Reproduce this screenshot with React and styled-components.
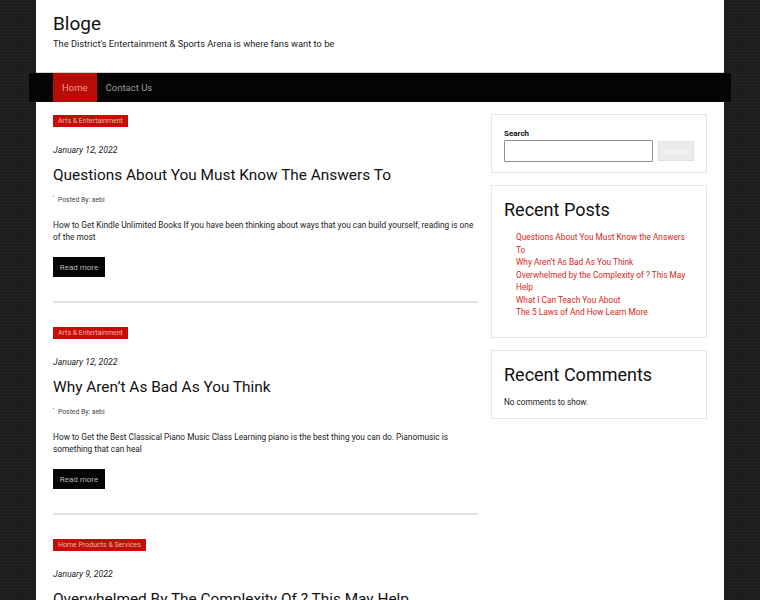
import React from "react";
import styled, { createGlobalStyle } from "styled-components";

const Global = createGlobalStyle`
  html, body { margin: 0; padding: 0; }
  body {
    background-color: #1b1b1d;
    background-image:
      linear-gradient(rgba(255,255,255,0.025) 1px, transparent 1px),
      linear-gradient(90deg, rgba(255,255,255,0.025) 1px, transparent 1px);
    background-size: 3px 3px;
    font-family: Roboto, "Liberation Sans", Arial, sans-serif;
    color: #222;
  }
`;

const Page = styled.div`
  width: 688px;
  margin: 0 auto;
  background: #fff;
  min-height: 600px;
`;

const Header = styled.header`
  height: 73px;
  box-sizing: border-box;
  padding: 13px 17px 0;
  border-bottom: 1px solid #d4d4d4;
`;

const SiteTitle = styled.h1`
  margin: 0;
  font-size: 19px;
  font-weight: 400;
  line-height: 22px;
  color: #111;
`;

const Tagline = styled.p`
  margin: 3px 0 0;
  font-size: 9.3px;
  line-height: 12px;
  color: #222;
`;

const Nav = styled.nav`
  margin: 0 -7px;
  height: 29px;
  background: #050505;
  border-radius: 3px;
  display: flex;
  padding-left: 24px;
`;

const NavItem = styled.a`
  display: flex;
  align-items: center;
  padding: 0 9px;
  font-size: 9.5px;
  color: ${(p) => (p.$active ? "#f39a94" : "#9a9a9a")};
  background: ${(p) => (p.$active ? "#b80c06" : "transparent")};
  text-decoration: none;
`;

const Main = styled.div`
  display: flex;
  gap: 13px;
  padding: 0 17px;
`;

const Content = styled.main`
  width: 425px;
  padding-top: 13px;
`;

const Post = styled.article`
  display: flex;
  flex-direction: column;
  align-items: flex-start;
`;

const Badge = styled.span`
  display: inline-block;
  height: 12px;
  line-height: 12px;
  padding: 0 5px;
  background: #c70b06;
  color: #f6b0aa;
  font-size: 7px;
`;

const PostDate = styled.div`
  margin-top: 18px;
  font-size: 8.7px;
  line-height: 11px;
  font-style: italic;
  color: #222;
`;

const PostTitle = styled.h2`
  margin: 9px 0 0;
  font-size: 15.4px;
  line-height: 20px;
  font-weight: 400;
  color: #111;
  white-space: nowrap;
`;

const Meta = styled.div`
  margin-top: 10px;
  display: flex;
  align-items: flex-start;
  gap: 4px;
  font-size: 6.8px;
  line-height: 10px;
  color: #444;
`;

const Dot = styled.span`
  width: 1px;
  height: 1px;
  margin-top: 1px;
  background: #888;
`;

const Excerpt = styled.p`
  margin: 14px 0 0;
  font-size: 8.3px;
  line-height: 12px;
  color: #222;
`;

const ReadMore = styled.a`
  margin-top: 14px;
  display: inline-flex;
  align-items: center;
  justify-content: center;
  width: 52px;
  height: 20px;
  background: #050505;
  color: #b5b5b5;
  font-size: 8px;
  text-decoration: none;
`;

const Separator = styled.hr`
  align-self: stretch;
  margin: 24px 0;
  border: 0;
  height: 2px;
  background: #e2e2e2;
`;

const Sidebar = styled.aside`
  width: 216px;
  padding-top: 12px;
  display: flex;
  flex-direction: column;
  gap: 12px;
`;

const Widget = styled.section`
  border: 1px solid #e6e6e6;
  box-sizing: border-box;
  height: ${(p) => p.$h}px;
  padding: ${(p) => p.$pt}px 12px 0;
`;

const SearchLabel = styled.label`
  display: block;
  font-size: 8px;
  font-weight: 700;
  line-height: 10px;
  color: #111;
`;

const SearchRow = styled.div`
  margin-top: 1px;
  display: flex;
  align-items: flex-start;
  gap: 5px;
`;

const SearchInput = styled.input`
  box-sizing: border-box;
  width: 149px;
  height: 22px;
  border: 1px solid #8f8f8f;
  border-radius: 1px;
  padding: 0 4px;
  margin: 0;
  outline: none;
`;

const SearchButton = styled.button`
  box-sizing: border-box;
  width: 38px;
  height: 20px;
  margin: 1px 0 0;
  padding: 0;
  border: 1px solid #e0e0e0;
  background: #ebebeb;
  color: #fafafa;
  font-family: Roboto, "Liberation Sans", Arial, sans-serif;
  font-size: 8px;
`;

const WidgetTitle = styled.h3`
  margin: 0;
  font-size: 18px;
  line-height: 22px;
  font-weight: 400;
  color: #111;
`;

const PostList = styled.ul`
  list-style: none;
  margin: 10px 0 0;
  padding: 0 0 0 12px;
`;

const PostLink = styled.li`
  font-size: 8.3px;
  line-height: 12.5px;
  color: #d81e1a;
`;

const NoComments = styled.p`
  margin: 10px 0 0;
  font-size: 8.2px;
  line-height: 12px;
  color: #222;
`;

const posts = [
  {
    cat: "Arts & Entertainment",
    date: "January 12, 2022",
    title: "Questions About You Must Know The Answers To",
    excerpt:
      "How to Get Kindle Unlimited Books If you have been thinking about ways that you can build yourself, reading is one of the most",
  },
  {
    cat: "Arts & Entertainment",
    date: "January 12, 2022",
    title: "Why Aren\u2019t As Bad As You Think",
    excerpt:
      "How to Get the Best Classical Piano Music Class Learning piano is the best thing you can do. Pianomusic is something that can heal",
  },
  {
    cat: "Home Products & Services",
    date: "January 9, 2022",
    title: "Overwhelmed By The Complexity Of ? This May Help",
    excerpt:
      "How to Choose the Best Home Products and Services There are many things to consider when you want to improve your home",
  },
];

const recent = [
  "Questions About You Must Know the Answers To",
  "Why Aren\u2019t As Bad As You Think",
  "Overwhelmed by the Complexity of ? This May Help",
  "What I Can Teach You About",
  "The 5 Laws of And How Learn More",
];

export default function App() {
  return (
    <>
      <Global />
      <Page>
        <Header>
          <SiteTitle>Bloge</SiteTitle>
          <Tagline>The District's Entertainment &amp; Sports Arena is where fans want to be</Tagline>
        </Header>
        <Nav>
          <NavItem $active href="#">Home</NavItem>
          <NavItem href="#">Contact Us</NavItem>
        </Nav>
        <Main>
          <Content>
            {posts.map((p, i) => (
              <Post key={i}>
                <Badge>{p.cat}</Badge>
                <PostDate>{p.date}</PostDate>
                <PostTitle>{p.title}</PostTitle>
                <Meta>
                  <Dot />
                  <span>Posted By: aebi</span>
                </Meta>
                <Excerpt>{p.excerpt}</Excerpt>
                <ReadMore href="#">Read more</ReadMore>
                <Separator />
              </Post>
            ))}
          </Content>
          <Sidebar>
            <Widget $h={59} $pt={14}>
              <SearchLabel>Search</SearchLabel>
              <SearchRow>
                <SearchInput type="text" />
                <SearchButton>Search</SearchButton>
              </SearchRow>
            </Widget>
            <Widget $h={153} $pt={13}>
              <WidgetTitle>Recent Posts</WidgetTitle>
              <PostList>
                {recent.map((r) => (
                  <PostLink key={r}>{r}</PostLink>
                ))}
              </PostList>
            </Widget>
            <Widget $h={69} $pt={13}>
              <WidgetTitle>Recent Comments</WidgetTitle>
              <NoComments>No comments to show.</NoComments>
            </Widget>
          </Sidebar>
        </Main>
      </Page>
    </>
  );
}
